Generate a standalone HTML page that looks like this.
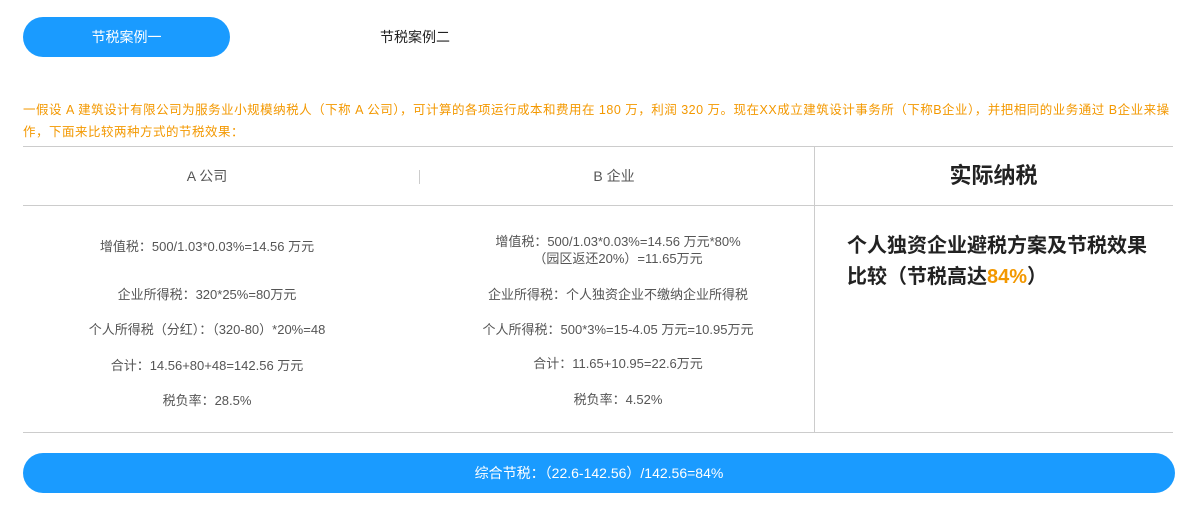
<!DOCTYPE html>
<html><head><meta charset="utf-8"><style>
body{margin:0;width:1198px;height:513px;background:#fff;font-family:"Liberation Sans","Noto Sans CJK SC",sans-serif;position:relative;overflow:hidden}
.a{position:absolute}
.c{position:absolute;text-align:center;font-size:13px;color:#555;line-height:17px}
</style></head><body>
<div class="a" style="left:23px;top:17px;width:207px;height:40px;border-radius:20px;background:#1a9bff;color:#fff;font-size:14px;line-height:40px;text-align:center">节税案例一</div>
<div class="a" style="left:340px;top:17px;width:150px;line-height:40px;font-size:14px;color:#222;text-align:center">节税案例二</div>
<div class="a" style="left:23px;top:99px;width:1170px;font-size:12.5px;line-height:22px;color:#f39800;letter-spacing:0.5px;white-space:nowrap">一假设 A 建筑设计有限公司为服务业小规模纳税人（下称 A 公司），可计算的各项运行成本和费用在 180 万，利润 320 万。现在XX成立建筑设计事务所（下称B企业），并把相同的业务通过 B企业来操<br>作，下面来比较两种方式的节税效果：</div>
<div class="a" style="left:23px;top:146px;width:1150px;height:1px;background:#ccc"></div>
<div class="a" style="left:23px;top:205px;width:1150px;height:1px;background:#ccc"></div>
<div class="a" style="left:23px;top:432px;width:1150px;height:1px;background:#ccc"></div>
<div class="a" style="left:814px;top:146px;width:1px;height:286px;background:#ccc"></div>
<div class="a" style="left:419px;top:170px;width:1px;height:14px;background:#ccc"></div>
<div class="c" style="left:107px;top:168px;width:200px;font-size:14px">A 公司</div>
<div class="c" style="left:514px;top:168px;width:200px;font-size:14px">B 企业</div>
<div class="a" style="left:814px;top:160px;width:359px;text-align:center;font-size:22px;font-weight:bold;color:#222;line-height:32px">实际纳税</div>
<div class="c" style="left:7px;top:238px;width:400px">增值税：500/1.03*0.03%=14.56 万元</div>
<div class="c" style="left:7px;top:286px;width:400px">企业所得税：320*25%=80万元</div>
<div class="c" style="left:7px;top:321px;width:400px">个人所得税（分红）：（320-80）*20%=48</div>
<div class="c" style="left:7px;top:357px;width:400px">合计：14.56+80+48=142.56 万元</div>
<div class="c" style="left:7px;top:392px;width:400px">税负率：28.5%</div>
<div class="c" style="left:418px;top:233px;width:400px">增值税：500/1.03*0.03%=14.56 万元*80%<br>（园区返还20%）=11.65万元</div>
<div class="c" style="left:418px;top:286px;width:400px">企业所得税：个人独资企业不缴纳企业所得税</div>
<div class="c" style="left:418px;top:321px;width:400px">个人所得税：500*3%=15-4.05 万元=10.95万元</div>
<div class="c" style="left:418px;top:355px;width:400px">合计：11.65+10.95=22.6万元</div>
<div class="c" style="left:418px;top:391px;width:400px">税负率：4.52%</div>
<div class="a" style="left:847px;top:231px;width:310px;font-size:20px;font-weight:bold;color:#222;line-height:31px">个人独资企业避税方案及节税效果<br>比较（节税高达<span style="color:#f39800">84%</span>）</div>
<div class="a" style="left:23px;top:453px;width:1152px;height:40px;border-radius:20px;background:#1a9bff;color:#fff;font-size:14px;line-height:40px;text-align:center">综合节税：（22.6-142.56）/142.56=84%</div>
</body></html>
